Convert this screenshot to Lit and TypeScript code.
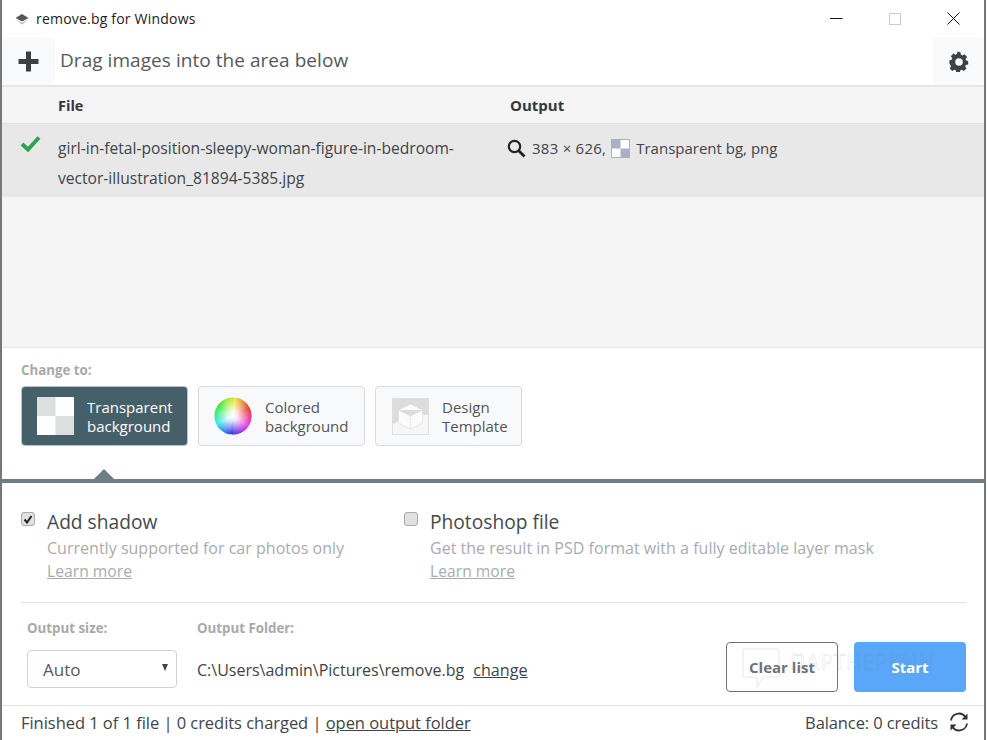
import { LitElement, html, css, svg } from "lit";
import { customElement } from "lit/decorators.js";

const wheel = () => {
  const out = [];
  for (let i = 0; i < 36; i++) {
    const a0 = (i * 10 - 90) * Math.PI / 180, a1 = ((i + 1.2) * 10 - 90) * Math.PI / 180;
    const r = 18.5;
    out.push(svg`<path d="M19 19L${19 + r * Math.cos(a0)} ${19 + r * Math.sin(a0)}A${r} ${r} 0 0 1 ${19 + r * Math.cos(a1)} ${19 + r * Math.sin(a1)}Z" fill="hsl(${(60 - i * 10 + 360) % 360},80%,55%)"/>`);
  }
  return out;
};

@customElement("app-root")
export class AppRoot extends LitElement {
  static styles = css`
    :host { display: block; width: 988px; height: 740px; background: #fff; font-family: "Open Sans", "Noto Sans", sans-serif; color: #3f4448; overflow: hidden; }
    * { box-sizing: border-box; }
    .win { width: 986px; height: 740px; border-left: 2px solid #777; border-right: 2px solid #777; display: flex; flex-direction: column; position: relative; }
    .title { height: 37px; display: flex; align-items: center; padding-left: 12px; flex: none; font-size: 14px; color: #222; gap: 6px; }
    .title span { flex: 1; letter-spacing: 0.2px; }
    .winbtns { display: flex; align-items: center; padding-right: 24px; }
    .winbtns svg { display: block; margin-left: 46px; }
    .toolbar { height: 48px; flex: none; display: flex; align-items: center; font-size: 19px; color: #55595d; }
    .tb { width: 53px; height: 48px; background: #f9fafb; border-radius: 4px; display: flex; align-items: center; justify-content: center; flex: none; }
    .tb.r { width: 51px; }
    .toolbar .msg { flex: 1; padding: 0 0 2px 5px; letter-spacing: 0.05px; }
    .head { height: 39px; flex: none; background: #f5f5f5; border-top: 2px solid #e6e6e6; border-bottom: 1px solid #e2e2e2; display: flex; align-items: center; font-size: 15px; font-weight: 700; color: #34383c; }
    .head .f { width: 508px; padding-left: 56px; font-size: 14.5px; }
    .list { height: 224px; flex: none; background: #f5f5f5; border-bottom: 1px solid #e8e8e8; }
    .row { height: 73px; background: #e8e8e8; display: flex; font-size: 15.6px; color: #3f4448; line-height: 30px; padding-top: 9px; }
    .ck { width: 56px; padding: 2px 0 0 18px; flex: none; }
    .ck svg { display: block; }
    .name { width: 449px; padding-right: 30px; flex: none; }
    .out { display: flex; align-items: flex-start; font-size: 15px; }
    .out svg { flex: none; margin-top: 6px; }
    .num { margin-left: 6px; letter-spacing: 0.25px; }
    .out .thumb { margin: 6px 6px 0 5px; }
    .change { height: 135px; flex: none; padding: 13px 0 0 19px; position: relative; border-bottom: 4px solid #6f7d87; }
    .lbl { font-size: 13.3px; font-weight: 700; color: #a9a9a9; line-height: 18px; }
    .opts { display: flex; gap: 10px; margin-top: 7px; }
    .opt { height: 60px; background: #f8f9fb; border: 1px solid #d8dadd; border-radius: 4px; display: flex; align-items: center; font-size: 15px; line-height: 19px; color: #555; padding-left: 15px; gap: 13px; }
    .opt .tx { padding-top: 1px; }
    .opt.a { width: 167px; background: #466069; border-color: #b8c6cb; color: #fff; }
    .opt.b { width: 167px; }
    .opt.c { width: 147px; padding-left: 16px; }
    .opt svg { display: block; flex: none; }
    .tri { position: absolute; left: 92px; bottom: 0; width: 0; height: 0; border-left: 10px solid transparent; border-right: 10px solid transparent; border-bottom: 10px solid #6f7d87; }
    .checks { height: 120px; flex: none; margin: 0 18px 0 19px; border-bottom: 1px solid #e3e3e3; display: flex; padding-top: 26px; }
    .chk { display: flex; gap: 12px; }
    .chk.one { width: 383px; }
    .box { width: 14px; height: 14px; margin-top: 3px; background: #e1e1e1; border: 1px solid #aaa; border-radius: 3px; flex: none; display: flex; align-items: center; justify-content: center; }
    .chk .t { font-size: 19.2px; line-height: 26px; color: #45494d; }
    .chk .d { font-size: 16px; line-height: 26px; color: #a9abae; letter-spacing: 0.02px; }
    .chk a { font-size: 15.7px; line-height: 20px; color: #a9abae; text-decoration: underline; display: block; }
    .bar { height: 103px; flex: none; display: flex; padding: 16px 18px 0 25px; border-bottom: 1px solid #e3e3e3; position: relative; }
    .c1 { width: 170px; flex: none; }
    .sel { width: 150px; height: 38px; margin-top: 13px; border: 1px solid #cfd2d5; border-radius: 4px; display: flex; align-items: center; justify-content: space-between; padding: 0 8px 0 15px; font-size: 17px; color: #55595d; }
    .sel i { width: 0; height: 0; border-left: 3.5px solid transparent; border-right: 3.5px solid transparent; border-top: 7px solid #444; margin-top: -3px; }
    .c2 { flex: 1; }
    .path { margin-top: 14px; height: 38px; display: flex; align-items: center; font-size: 16px; color: #3f4448; gap: 9px; }
    .path a { text-decoration: underline; font-size: 16.2px; }
    .btns { display: flex; gap: 16px; padding-top: 23px; }
    .btn { width: 112px; height: 50px; border-radius: 4px; display: flex; align-items: center; justify-content: center; font-size: 15px; font-weight: 700; }
    .clear { border: 1px solid #6e7277; color: #6e7277; background: transparent; }
    .start { background: #5aa6f8; color: #fff; }
    .status { flex: 1; display: flex; align-items: center; padding: 0 15px 2px 19px; font-size: 16.5px; letter-spacing: -0.04px; color: #3f4448; }
    .status a { text-decoration: underline; }
    .status .s { flex: 1; }
    .status .bal { letter-spacing: -0.1px; }
    .status svg { margin-left: 11px; }
    .wm { position: absolute; left: 740px; top: 45px; display: flex; align-items: center; gap: 10px; pointer-events: none; font-size: 21px; letter-spacing: 0.8px; color: transparent; -webkit-text-stroke: 0.6px rgba(120,130,140,.22); }
    .wm span { margin-top: -12px; }
    .wm svg { display: block; }
  `;

  render() {
    return html`<div class="win">
      <div class="title">
        <svg width="16" height="12" viewBox="0 0 16 12"><path d="M8 1l6.500 4L8 8.500 1.500 5z" fill="#555"/><path d="M1.500 6.500L8 10l6.500-3.500L8 11.500z" fill="#aaa"/></svg>
        <span>remove.bg for Windows</span>
        <div class="winbtns">
          <svg width="13" height="13" viewBox="0 0 13 13"><path d="M0 6.500h12.500" stroke="#111" stroke-width="1"/></svg>
          <svg width="12" height="12" viewBox="0 0 12 12"><rect x=".5" y=".5" width="11" height="11" fill="none" stroke="#ccc"/></svg>
          <svg width="13" height="13" viewBox="0 0 13 13"><path d="M.5.5l12 12M12.500.5l-12 12" stroke="#111" fill="none"/></svg>
        </div>
      </div>
      <div class="toolbar">
        <div class="tb"><svg width="21" height="21" viewBox="0 0 21 21"><path d="M10.500 0.500v20M.5 10.500h20" stroke="#3d3f42" stroke-width="5"/></svg></div>
        <div class="msg">Drag images into the area below</div>
        <div class="tb r"><svg width="20" height="21" viewBox="0 0 24 24"><path fill="#3f4245" fill-rule="evenodd" d="M13.800 1l.5 3c.6.2 1.200.5 1.700.8l2.600-1.500 3.100 3.400-1.800 2.400c.3.6.5 1.200.6 1.800l2.500.6v4l-2.900.7c-.2.600-.4 1.100-.7 1.600l1.500 2.600-3 3-2.600-1.500c-.5.300-1 .5-1.600.7l-.8 2.900h-4l-.8-2.900c-.6-.2-1.100-.4-1.600-.7l-2.600 1.500-3-3 1.500-2.600c-.3-.5-.5-1-.7-1.600L.5 14.500v-4l2.700-.6c.2-.6.400-1.200.7-1.800L2.200 5.700l3.100-3.400 2.600 1.500c.5-.3 1.100-.6 1.700-.8l.5-3zM12 8a4.500 4.500 0 1 0 0 9 4.500 4.500 0 0 0 0-9z"/></svg></div>
      </div>
      <div class="head"><div class="f">File</div><div>Output</div></div>
      <div class="list">
        <div class="row">
          <div class="ck"><svg width="21" height="17" viewBox="0 0 21 17"><path d="M2 9l6 5.500L19 2.500" fill="none" stroke="#2fa14f" stroke-width="4"/></svg></div>
          <div class="name">girl-in-fetal-position-sleepy-woman-figure-in-bedroom-vector-illustration_81894-5385.jpg</div>
          <div class="out">
            <svg width="19" height="19" viewBox="0 0 19 19"><circle cx="7.500" cy="7.500" r="5.700" fill="none" stroke="#222" stroke-width="2.200"/><path d="M11.500 11.500l6 6" stroke="#222" stroke-width="2.800"/></svg>
            <span class="num">383 × 626,</span>
            <svg class="thumb" width="19" height="19" viewBox="0 0 19 19"><rect width="19" height="19" fill="#a8b2c4"/><rect x="9.500" y="1" width="8.500" height="8.500" fill="#fff"/><rect x="1" y="9.500" width="8.500" height="8.500" fill="#fff"/></svg>
            <span>Transparent bg, png</span>
          </div>
        </div>
      </div>
      <div class="change">
        <div class="lbl">Change to:</div>
        <div class="opts">
          <div class="opt a">
            <svg width="37" height="38" viewBox="0 0 37 38"><rect width="37" height="38" fill="#fff"/><rect width="18.500" height="19" fill="#dcdfe0"/><rect x="18.500" y="19" width="18.500" height="19" fill="#dcdfe0"/></svg>
            <div class="tx">Transparent<br>background</div>
          </div>
          <div class="opt b">
            <svg width="38" height="38" viewBox="0 0 38 38"><defs><radialGradient id="w"><stop offset="0" stop-color="#fff"/><stop offset=".25" stop-color="#fff" stop-opacity=".85"/><stop offset="1" stop-color="#fff" stop-opacity="0"/></radialGradient></defs>${wheel()}<circle cx="19" cy="19" r="18.500" fill="url(#w)"/></svg>
            <div class="tx">Colored<br>background</div>
          </div>
          <div class="opt c">
            <svg width="37" height="37" viewBox="0 0 37 37"><rect x=".5" y=".5" width="36" height="36" fill="#f5f6f7" stroke="#e0e0e0"/><path d="M1 1h35v16q-17-2-35 9z" fill="#dcdcdc"/><path d="M18.500 6l12 6v13l-12 6-12-6V12zM6.500 12l12 6 12-6M18.500 18v13" fill="#fbfbfb" stroke="#cfcfcf" stroke-width=".6" stroke-dasharray="1.500 1"/></svg>
            <div class="tx">Design<br>Template</div>
          </div>
        </div>
        <div class="tri"></div>
      </div>
      <div class="checks">
        <div class="chk one">
          <div class="box"><svg width="10" height="9" viewBox="0 0 10 9"><path d="M1.500 4.500l2.500 3 4.500-6.500" fill="none" stroke="#222" stroke-width="2"/></svg></div>
          <div><div class="t">Add shadow</div><div class="d">Currently supported for car photos only</div><a>Learn more</a></div>
        </div>
        <div class="chk">
          <div class="box"></div>
          <div><div class="t">Photoshop file</div><div class="d">Get the result in PSD format with a fully editable layer mask</div><a>Learn more</a></div>
        </div>
      </div>
      <div class="bar">
        <div class="c1"><div class="lbl">Output size:</div><div class="sel">Auto<i></i></div></div>
        <div class="c2"><div class="lbl">Output Folder:</div><div class="path">C:\\Users\\admin\\Pictures\\remove.bg <a>change</a></div></div>
        <div class="btns"><div class="btn clear">Clear list</div><div class="btn start">Start</div></div>
        <div class="wm"><svg width="38" height="40" viewBox="0 0 38 40"><path d="M3 1h32q2 0 2 2v24q0 2-2 2H22l-7 10v-10H3q-2 0-2-2V3q0-2 2-2z" fill="none" stroke="rgba(120,130,140,.13)" stroke-width="1.500"/></svg><span>ПАРТНЕРКИН</span></div>
      </div>
      <div class="status">
        <div class="s">Finished 1 of 1 file | 0 credits charged | <a>open output folder</a></div>
        <div class="bal">Balance: 0 credits</div>
        <svg width="20" height="20" viewBox="0 0 20 20"><path d="M2 8.500A8 8 0 0 1 16.500 5M18 11.500A8 8 0 0 1 3.500 15" fill="none" stroke="#333" stroke-width="1.800"/><path d="M18.500 1.500v6h-6zM1.500 18.500v-6h6z" fill="#333"/></svg>
      </div>
    </div>`;
  }
}
